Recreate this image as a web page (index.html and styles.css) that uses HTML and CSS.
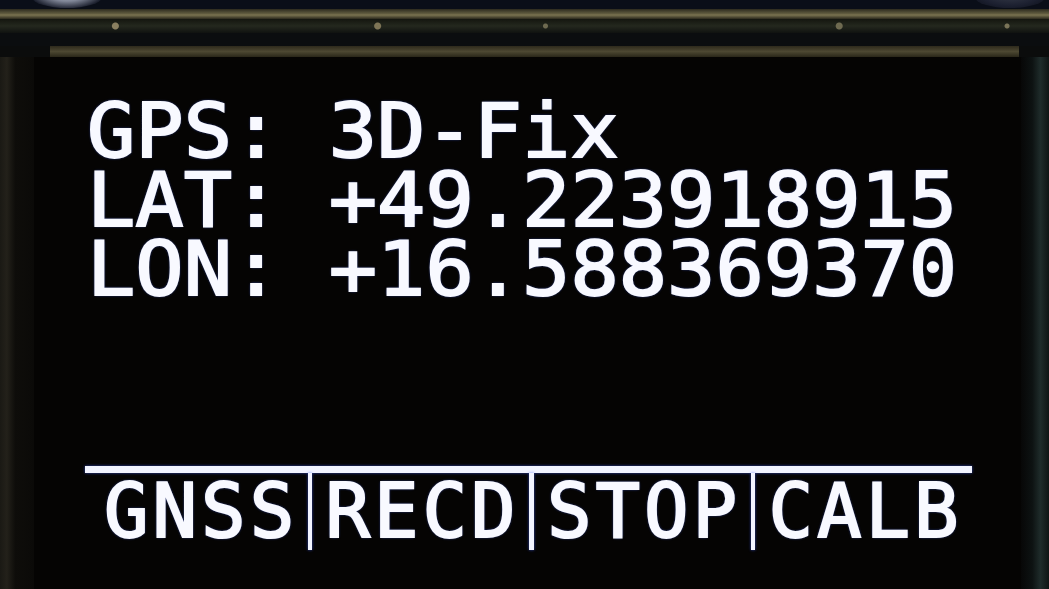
FILE: index.html
```html
<!DOCTYPE html>
<html lang="en">
<head>
<meta charset="utf-8">
<title>GPS OLED</title>
<link rel="stylesheet" href="styles.css">
</head>
<body>
<div class="device">
  <div class="bezel-top">
    <div class="strip strip-navy"></div>
    <div class="strip strip-gold"></div>
    <div class="strip strip-specks"></div>
    <div class="strip strip-dark"></div>
    <div class="strip strip-gold2"><span class="gold2-bar"></span></div>
    <span class="screw screw-left"></span>
    <span class="screw screw-right"></span>
  </div>
  <div class="middle">
    <div class="edge-left"></div>
    <div class="screen">
      <div class="info">
        <div class="row"><span class="label">GPS:</span><span class="value">3D-Fix</span></div>
        <div class="row"><span class="label">LAT:</span><span class="value">+49.223918915</span></div>
        <div class="row"><span class="label">LON:</span><span class="value">+16.588369370</span></div>
      </div>
      <div class="menu">
        <div class="menu-line"></div>
        <div class="menu-items">
          <span class="item">GNSS</span>
          <span class="sep"></span>
          <span class="item">RECD</span>
          <span class="sep"></span>
          <span class="item">STOP</span>
          <span class="sep"></span>
          <span class="item">CALB</span>
        </div>
      </div>
    </div>
    <div class="edge-right"></div>
  </div>
</div>
</body>
</html>
```

FILE: styles.css
```css
* { box-sizing: border-box; }
html, body {
  margin: 0;
  padding: 0;
  width: 1049px;
  height: 589px;
  overflow: hidden;
  background: #070605;
}
.device {
  width: 1049px;
  height: 589px;
  display: flex;
  flex-direction: column;
}
.bezel-top {
  position: relative;
  height: 57px;
  display: flex;
  flex-direction: column;
  background: #0b0d10;
}
.strip-navy { height: 9px; background: #0a0e18; }
.strip-gold {
  height: 10px;
  background: linear-gradient(180deg, #2c2a1e 0%, #5f5a3e 45%, #7a7350 60%, #2a281c 100%);
}
.strip-specks {
  height: 14px;
  background:
    radial-gradient(circle at 11% 50%, #8a8060 0 3px, transparent 4px),
    radial-gradient(circle at 36% 50%, #7e7556 0 3px, transparent 4px),
    radial-gradient(circle at 52% 50%, #6e6a50 0 2px, transparent 3px),
    radial-gradient(circle at 80% 50%, #6e6a50 0 3px, transparent 4px),
    radial-gradient(circle at 96% 50%, #7a7458 0 2px, transparent 3px),
    linear-gradient(180deg, #14160f 0%, #24281e 50%, #101210 100%);
}
.strip-dark { height: 13px; background: #0b0d0f; }
.strip-gold2 {
  height: 11px;
  display: flex;
  background: #0b0c0c;
  padding-left: 50px;
  padding-right: 30px;
}
.gold2-bar {
  flex: 1;
  background: linear-gradient(180deg, #2e2a1c 0%, #4d4832 50%, #2a2719 100%);
}
.screw {
  position: absolute;
  top: -14px;
  width: 70px;
  height: 22px;
  border-radius: 50%;
  background: radial-gradient(ellipse at 50% 30%, #c8ccd6 0%, #7f8596 40%, #1a1e2c 75%, #0a0d16 100%);
}
.screw-left { left: 32px; }
.screw-right { left: 975px; background: radial-gradient(ellipse at 50% 30%, #3a3f4c 0%, #1c2030 60%, #0a0d16 100%); }

.middle {
  flex: 1;
  display: flex;
  min-height: 0;
}
.edge-left {
  width: 34px;
  background: linear-gradient(90deg, #1a1914 0%, #23211a 20%, #0e0d0a 45%, #0b0a08 100%);
}
.edge-right {
  width: 28px;
  background: linear-gradient(90deg, #070707 0%, #0d1212 40%, #1f2c2b 70%, #0f1515 100%);
}
.screen {
  flex: 1;
  background: #050403;
  display: flex;
  flex-direction: column;
  padding-top: 40px;
  padding-left: 53px;
}
.info {
  font-family: "DejaVu Sans Mono", "Liberation Mono", monospace;
  font-weight: normal;
  font-size: 80.3px;
  line-height: 74px;
  color: #f8f9ff;
  -webkit-text-stroke: 2px #f8f9ff;
  text-shadow: 0 0 3px #4a6cff;
  transform: scaleY(0.93);
  transform-origin: top left;
}
.row { display: flex; height: 74px; }
.label { width: 5ch; }
.menu {
  margin-top: 147px;
  margin-left: -2px;
  width: 887px;
  display: flex;
  flex-direction: column;
}
.menu-line {
  height: 7px;
  background: #f2f4ff;
  box-shadow: 0 0 3px rgba(70, 100, 255, 0.7);
}
.menu-items {
  display: flex;
  align-items: flex-start;
  padding-left: 19px;
}
.item {
  font-family: "DejaVu Sans Mono", "Liberation Mono", monospace;
  font-size: 74px;
  line-height: 68px;
  letter-spacing: 4px;
  color: #f8f9ff;
  -webkit-text-stroke: 2px #f8f9ff;
  text-shadow: 0 0 3px #4a6cff;
  width: 208px;
  padding-top: 4px;
}
.sep {
  width: 5px;
  height: 77px;
  background: #f2f4ff;
  box-shadow: 0 0 3px rgba(70, 100, 255, 0.7);
  margin-right: 13px;
}
```
